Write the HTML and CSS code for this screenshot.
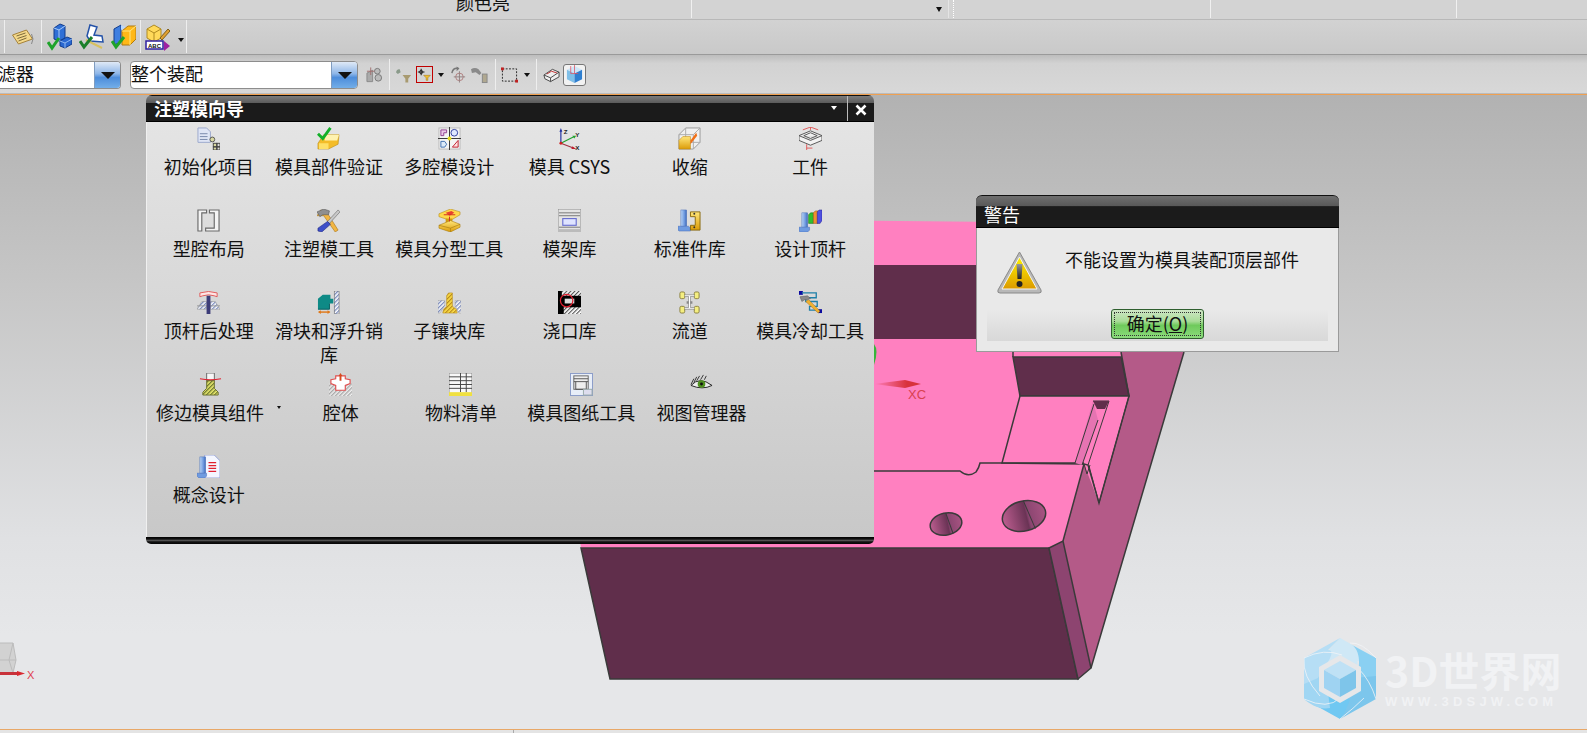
FILE: index.html
```html
<!DOCTYPE html>
<html lang="zh-CN">
<head>
<meta charset="utf-8">
<title>注塑模向导</title>
<link rel="stylesheet" href="styles.css">
</head>
<body>
<svg class="defs" width="0" height="0" aria-hidden="true">
  <defs>
    <pattern id="hb" width="3" height="3" patternUnits="userSpaceOnUse" patternTransform="rotate(45)"><rect width="3" height="3" fill="#fff"/><rect width="1.4" height="3" fill="#7f8fc0"/></pattern>
    <pattern id="hg" width="3" height="3" patternUnits="userSpaceOnUse" patternTransform="rotate(45)"><rect width="3" height="3" fill="#eee"/><rect width="1.4" height="3" fill="#aaa"/></pattern>
    <pattern id="hy" width="3" height="3" patternUnits="userSpaceOnUse" patternTransform="rotate(45)"><rect width="3" height="3" fill="#ffe24a"/><rect width="1.3" height="3" fill="#b98a1c"/></pattern>
    <pattern id="hl" width="3" height="3" patternUnits="userSpaceOnUse" patternTransform="rotate(45)"><rect width="3" height="3" fill="#f0ef70"/><rect width="1.4" height="3" fill="#6f7a30"/></pattern>
    <pattern id="hk" width="3" height="3" patternUnits="userSpaceOnUse" patternTransform="rotate(45)"><rect width="3" height="3" fill="#fff"/><rect width="1.2" height="3" fill="#555"/></pattern>
    <linearGradient id="gold" x1="0" y1="0" x2="0" y2="1"><stop offset="0" stop-color="#ffe67a"/><stop offset="1" stop-color="#dc9c08"/></linearGradient>
    <linearGradient id="pin" x1="0" y1="0" x2="1" y2="0"><stop offset="0" stop-color="#b8d2f4"/><stop offset=".6" stop-color="#6f9be0"/><stop offset="1" stop-color="#3f68b8"/></linearGradient>
    <linearGradient id="warn" x1="0" y1="0" x2="0" y2="1"><stop offset="0" stop-color="#fff200"/><stop offset="1" stop-color="#dc9a00"/></linearGradient>
    <linearGradient id="mark" x1="0" y1="0" x2="0" y2="1"><stop offset="0" stop-color="#999"/><stop offset="1" stop-color="#222"/></linearGradient>
    <linearGradient id="axis" x1="0" y1="0" x2="1" y2="0"><stop offset="0" stop-color="#ff80c0"/><stop offset=".7" stop-color="#d8323c"/><stop offset="1" stop-color="#d8323c"/></linearGradient>
    <linearGradient id="bore" x1="0" y1="0" x2="1" y2="0"><stop offset="0" stop-color="#bd5e90"/><stop offset=".55" stop-color="#6a3355"/><stop offset=".6" stop-color="#8a4570"/><stop offset="1" stop-color="#a85482"/></linearGradient>
  </defs>
</svg>

<header class="ribbon">
  <div class="rb-cell rb-title"><span class="rb-text">颜色亮</span></div>
  <div class="rb-cell rb-b"><span class="rb-caret"></span></div>
  <div class="rb-cell rb-grip"></div>
  <div class="rb-cell rb-c"></div>
  <div class="rb-cell rb-d"></div>
  <div class="rb-cell rb-e"></div>
</header>

<div class="bar-one">
  <div class="grp g-a">
    <svg class="ti-tag" viewBox="0 0 22 18"><path d="M1 7 15 2l6 9-14 5z" fill="#f4d98a" stroke="#a5813a"/><path d="M5 8l9-3M6 10.500l9-3M7 13l8-3" stroke="#7d6a3a"/><path d="M20 6q3 5 0 10" fill="none" stroke="#888"/></svg>
  </div>
  <div class="grp g-b">
    <svg class="ti" viewBox="0 0 25 28"><path d="M7 5l6-4 5 2v12l-6 3-5-2z" fill="#2f6fd6" stroke="#123c8c"/><path d="M7 5l5 2 6-4M12 7v11" fill="none" stroke="#a8ccf8"/><path d="M13 18l7-4 5 2v5l-7 4-5-2z" fill="#2a68d0" stroke="#123c8c"/><path d="M13 18l5 2 7-4M18 20v5" fill="none" stroke="#8fb8f0"/><path d="M1 19l4 6 7-10" fill="none" stroke="#1fa32a" stroke-width="3"/></svg>
    <svg class="ti" viewBox="0 0 25 28"><path d="M11 2l7 2-3 8 8 1 1 6-13-1-3-5z" fill="#fff" stroke="#2452a8" stroke-width="1.500"/><path d="M7 17l16 8" stroke="#d8c060" stroke-width="2"/><path d="M1 18l4 6 8-10" fill="none" stroke="#1a7f2a" stroke-width="3"/></svg>
    <svg class="ti" viewBox="0 0 25 28"><path d="M3 6l7-4v17l-7 3z" fill="#3f7fe0" stroke="#123c8c"/><path d="M10 2l5 2-5 3z" fill="#bcd8fa"/><path d="M11 8l6-5h8v13l-6 6h-8z" fill="#ffb818" stroke="#b07a10"/><path d="M11 8h8l6-5M19 8v14" fill="none" stroke="#ffe680"/><path d="M1 18l4 6 8-10" fill="none" stroke="#1fa32a" stroke-width="3"/></svg>
  </div>
  <div class="grp g-c">
    <svg class="ti" viewBox="0 0 25 28"><path d="M2 6l7-4 7 4v9l-7 4-7-4z" fill="#ffd95a" stroke="#b08a20"/><path d="M2 6l7 4 7-4M9 10v9" fill="none" stroke="#b08a20"/><path d="M15 15l8-9 2 2-8 9z" fill="#e0a030" stroke="#806018"/><rect x="1" y="18" width="17" height="8" fill="#fff" stroke="#3020a0" stroke-width="1.500"/><text class="ti-abc" x="3" y="25">ABC</text><path d="M19 18l6 5-6 5z" fill="#a020a0"/></svg>
    <span class="caret"></span>
  </div>
</div>

<div class="bar-two">
  <div class="combo c-one"><span class="combo-text clip">滤器</span><span class="combo-btn"></span></div>
  <div class="combo c-two"><span class="combo-text">整个装配</span><span class="combo-btn"></span></div>
  <div class="grp2 h-a">
    <svg class="ti2" viewBox="0 0 18 18"><path d="M1 7l6-3v12H1z" fill="#aaa" stroke="#888"/><circle cx="12" cy="5" r="3" fill="#bbb" stroke="#777"/><circle cx="13" cy="12" r="3.500" fill="#bbb" stroke="#777"/><path d="M5 1v8M1 5h8" stroke="#a07070"/></svg>
  </div>
  <div class="grp2 h-b">
    <svg class="ti2" viewBox="0 0 18 18"><path d="M1 6q1-4 4-3l1 3-3 2z" fill="#8a9a8a"/><path d="M8 9h9l-3 4v4h-3v-4z" fill="#a89a70"/></svg>
    <svg class="ti2 boxed" viewBox="0 0 18 18"><path d="M5 2v8M1 6h8" stroke="#222" stroke-width="1.300"/><circle cx="5" cy="6" r="2" fill="none" stroke="#222"/><path d="M8 10h8l-3 3v3h-2v-3z" fill="#f0c030" stroke="#a07010" stroke-width=".6"/></svg>
    <span class="caret small"></span>
    <svg class="ti2" viewBox="0 0 18 18"><path d="M2 7q1-6 7-5" fill="none" stroke="#777" stroke-width="1.500"/><path d="M7 0l3 2-3 3z" fill="#777"/><circle cx="10" cy="11" r="4" fill="none" stroke="#b08080"/><path d="M10 5v12M4 11h12" stroke="#908080"/></svg>
    <svg class="ti2" viewBox="0 0 18 18"><path d="M0 3q4-3 8 0l3 4-2 2-4-3-4 1z" fill="#8a8a8a"/><rect x="12" y="8" width="5" height="9" fill="#b0a890" stroke="#888"/></svg>
  </div>
  <div class="grp2 h-c">
    <svg class="ti2" viewBox="0 0 18 18"><rect x="1.500" y="2.500" width="15" height="13" fill="none" stroke="#222" stroke-dasharray="2 1.500"/><rect x="0" y="1" width="3" height="3" fill="#c02020"/><rect x="15" y="14" width="3" height="3" fill="#c02020"/></svg>
    <span class="caret small"></span>
  </div>
  <div class="grp2 h-d">
    <svg class="ti2" viewBox="0 0 18 18"><path d="M1 9l9-6 7 3v5l-9 5-6-3z" fill="#eee" stroke="#444"/><path d="M4 8l5-3 6 2" fill="none" stroke="#c03030"/><path d="M1 9l7 3 9-6M8 12v4" fill="none" stroke="#444"/></svg>
    <div class="view-btn"><svg class="ti3" viewBox="0 0 18 20"><path d="M1 5l8-4 8 4-8 4z" fill="#cfe6f8"/><path d="M1 5l8 4v10l-8-4z" fill="#7fbfe8"/><path d="M17 5l-8 4v10l8-4z" fill="#2f7fd0"/><path d="M5 1v8h8M9 0v9" fill="none" stroke="#e05060" stroke-width=".8"/></svg></div>
  </div>
</div>

<main class="viewport">
  <svg class="scene" viewBox="0 95 1587 634">
    <!-- part faces -->
    <polygon class="pink" points="800,220 1000,222 1184,352 1063,541 1049,548 581,548 560,400"/>
    <polygon class="side" points="1195,300 1184,352 1091,668 1063,541 1084,464 1099,503 1129,396 1121,352 1121,200"/>
    <polygon class="dark" points="800,265 1010,265 1013,339 800,339"/>
    <polygon class="dark edge" points="1013,357 1121,357 1129,396 1020,396"/>
    <polygon class="pink edge" points="1020,396 1129,396 1099,503 1088,465 1084,464 1002,463"/>
    <polygon class="dark edge" points="581,548 1049,548 1078,679 610,679"/>
    <polygon class="chamfer edge" points="1049,548 1063,541 1091,668 1078,679"/>
    <path class="line" d="M1184,352 1091,668M1121,352 1129,396M1013,339 1013,357"/>
    <path class="line" d="M1084,464 1063,541"/>
    <path class="line" d="M874,471H960Q968,478 976,472Q979,468 980,463H1084"/>
    <!-- slot -->
    <polygon class="sideflat" points="1093,401 1098,420 1082,465 1075,463"/>
    <path class="thin" d="M1093,401H1109L1088,465M1098,420 1082,465M1094,404 1075,463"/>
    <polygon class="dark" points="1093,401 1109,401 1105,409 1097,409"/>
    <path class="thin" d="M1084,464 1087,474 1090,465M1129,396 1099,503 1089,466"/>
    <!-- holes -->
    <g transform="rotate(-12 946 524)"><ellipse class="hole" cx="946" cy="524" rx="16" ry="11"/><path class="thin" d="M948,513 951,535"/></g>
    <g transform="rotate(-14 1024 516)"><ellipse class="hole" cx="1024" cy="516" rx="22" ry="15"/><path class="thin" d="M1027,501 1032,531"/></g>
    <!-- axes -->
    <path class="green" d="M874,344Q879,350 874,365z"/>
    <path class="axis" d="M874,384 905,380 921,384 905,388z"/>
    <text class="xc" x="908" y="399">XC</text>
    <!-- triad -->
    <path class="triad" d="M-8,643H13L16,660 13,673H-8z"/>
    <path class="triad-line" d="M13,643 9,660 13,673M-8,660H16"/>
    <rect class="triad-arm" x="-2" y="672" width="20" height="3"/>
    <path class="triad-tip" d="M17,671l8,2.500-8,2.500z"/>
    <text class="xmark" x="27" y="679">X</text>
  </svg>

  <section class="panel">
    <div class="panel-title">
      <span class="panel-name">注塑模向导</span>
      <span class="panel-arrow"></span>
      <span class="panel-close"><svg class="close-x" viewBox="0 0 12 12"><path d="M1.500 1.500l9 9M10.500 1.500l-9 9" stroke="#fff" stroke-width="2.600"/></svg></span>
    </div>
    <div class="panel-body">
      <div class="row">
        <div class="cell"><svg class="pi" viewBox="0 0 24 24"><path d="M1 1h9l4 4v11H1z" fill="#dfe5f5" stroke="#9aa7cc"/><path d="M3 7h8M3 10h8M3 13h8" stroke="#7788aa"/><circle cx="16" cy="13" r="2.500" fill="#d8d8a0" stroke="#555"/><rect x="17" y="17" width="3.500" height="3.500" fill="#d8d8a0" stroke="#444"/><rect x="17" y="21" width="3.500" height="3" fill="#d8d8a0" stroke="#444"/><rect x="21" y="17" width="3" height="3.500" fill="#ddd" stroke="#444"/><rect x="21" y="21" width="3" height="3" fill="#ddd" stroke="#444"/></svg><span class="label">初始化项目</span></div>
        <div class="cell"><svg class="pi" viewBox="0 0 24 24"><path d="M1 17 7 8h16l-1 10-10 5H1z" fill="#f4bc28" stroke="#b88b18" stroke-width=".6"/><path d="M8 14h13l2-6H9z" fill="#fff2b0"/><path d="M2 17l10 0v6H2z" fill="#ffe067"/><path d="M1 7l5 5 8-11" fill="none" stroke="#12b028" stroke-width="3"/></svg><span class="label">模具部件验证</span></div>
        <div class="cell"><svg class="pi" viewBox="0 0 24 24"><rect x="1" y="1" width="22" height="22" fill="#f4f4f4" stroke="#bbb"/><path d="M12 0v24M0 12h24" stroke="#333"/><path d="M3 3h6v3H6v3H3z" fill="#eac8e8" stroke="#904090"/><circle cx="17" cy="6" r="3.500" fill="#dfe8ff" stroke="#3040a0"/><path d="M3 15h4l2 3-2 3H3z" fill="#dceaf8" stroke="#4070b0"/><path d="M21 14v7h-6z" fill="#ffe0e0" stroke="#c02030"/><circle cx="12" cy="12" r="2" fill="#e8e020"/></svg><span class="label">多腔模设计</span></div>
        <div class="cell"><svg class="pi" viewBox="0 0 24 24"><path d="M3 17V3" stroke="#2030a0" stroke-width="1.200"/><path d="M1.500 5 3 1l1.500 4z" fill="#2030a0"/><path d="M3 17 17 10" stroke="#20a030" stroke-width="1.200"/><path d="M15 9l4 0-2 3z" fill="#20a030"/><path d="M3 17l13 5" stroke="#a03040" stroke-width="1.200"/><path d="M15 20l4 3-5 0z" fill="#c02030"/><circle cx="3" cy="17" r="1.500" fill="#d02020"/><text class="axis-t" x="6" y="7">Z</text><text class="axis-t" x="18" y="10">Y</text><text class="axis-t" x="18" y="24">X</text></svg><span class="label">模具 CSYS</span></div>
        <div class="cell"><svg class="pi" viewBox="0 0 24 24"><path d="M8 1h15v15l-7 7H1V8z" fill="#f0f0f0" stroke="#999"/><path d="M1 8h15v15M16 8l7-7M8 1v15h15" fill="none" stroke="#aaa"/><path d="M1 14l4-4h8v13H1z" fill="url(#gold)" stroke="#c08a18" stroke-width=".6"/><path d="M13 14l6-8 1 3-7 9z" fill="#f07018"/></svg><span class="label">收缩</span></div>
        <div class="cell"><svg class="pi" viewBox="0 0 24 24"><path d="M0 9 12 4l12 5-12 5zM0 9v5l12 5 12-5V9" fill="#f2f2f2" stroke="#555"/><path d="M5 9l7-3 7 3-7 3z" fill="none" stroke="#555"/><path d="M12 0v3M4 3l8-3 8 3M8 22h6M8 18v6" fill="none" stroke="#e05a5a"/></svg><span class="label">工件</span></div>
      </div>
      <div class="row">
        <div class="cell"><svg class="pi" viewBox="0 0 24 24"><path d="M1 1h9v3H5v19H1zM13 1h10v22H9v-3h9V4h-5z" fill="#f4f4f4" stroke="#6a6a6a" stroke-width="1.200"/></svg><span class="label">型腔布局</span></div>
        <div class="cell"><svg class="pi" viewBox="0 0 24 24"><path d="M4 1 10 3 22 22l-3 2L7 7 0 7z" fill="#f2b642" stroke="#a07018" stroke-width=".6"/><path d="M0 3l7-3 6 2-1 4-6 0-3 2z" fill="#8f8f8f" stroke="#555" stroke-width=".6"/><path d="M22 1l2 2-11 12-2-2z" fill="#c8c8c8" stroke="#666" stroke-width=".6"/><path d="M11 13l3 3-9 8-4-1 0-3z" fill="#3d4fc8" stroke="#1a2380" stroke-width=".6"/></svg><span class="label">注塑模工具</span></div>
        <div class="cell"><svg class="pi" viewBox="0 0 24 24"><path d="M1 5 13 0l10 3v3l-10 6L1 8z" fill="#ffd84a" stroke="#b48a18" stroke-width=".6"/><path d="M8 4l6-2 3 2-5 3z" fill="#e84030"/><path d="M8 10h7v6H8z" fill="#d49a10"/><path d="M1 17 13 12l10 4v3l-10 5-12-4z" fill="url(#gold)" stroke="#a87c10" stroke-width=".6"/><path d="M1 17l12 3 10-4M13 20v4" fill="none" stroke="#a87c10" stroke-width=".7"/><path d="M12 8v5M6 6h12" stroke="#d03020"/></svg><span class="label">模具分型工具</span></div>
        <div class="cell"><svg class="pi" viewBox="0 0 24 24"><rect x="0" y="0" width="24" height="24" fill="#e4e4e4" stroke="#888"/><path d="M1 4h22M1 7h22M1 19h22" stroke="#777"/><rect x="5" y="10" width="14" height="7" fill="#dfe4ff" stroke="#6a70d0" stroke-width="1.200"/><rect x="0" y="21" width="24" height="3" fill="#bbb"/></svg><span class="label">模架库</span></div>
        <div class="cell"><svg class="pi" viewBox="0 0 24 24"><rect x="3" y="1" width="6" height="17" fill="url(#pin)" stroke="#4a70b8" stroke-width=".5"/><path d="M0 18h11l2 2v3H1l-1-1z" fill="#6f9be0" stroke="#3f68b8" stroke-width=".5"/><path d="M13 3h10v19H13v-5h5V8h-5z" fill="url(#gold)" stroke="#8a6a10"/><circle cx="17" cy="5" r="1" fill="#333"/><circle cx="17" cy="19" r="1" fill="#333"/></svg><span class="label">标准件库</span></div>
        <div class="cell"><svg class="pi" viewBox="0 0 24 24"><rect x="3" y="4" width="6" height="15" fill="url(#pin)" stroke="#4a70b8" stroke-width=".5"/><path d="M0 19h11v3l-2 2H1l-1-1z" fill="#6f9be0" stroke="#3f68b8" stroke-width=".5"/><path d="M10 6l2-2h3v11h-5z" fill="#2fc02f" stroke="#106010" stroke-width=".5"/><path d="M15 4l2-2h3v13h-5z" fill="#f09030" stroke="#905010" stroke-width=".5"/><path d="M19 3l2-2h3v11l-2 3h-3z" fill="#5050e0" stroke="#202090" stroke-width=".5"/></svg><span class="label">设计顶杆</span></div>
      </div>
      <div class="row">
        <div class="cell"><svg class="pi" viewBox="0 0 24 24"><path d="M3 6V2q9-3 18 0v4l-3-1q-6-2-12 0z" fill="#ffe4e4" stroke="#e05a5a"/><path d="M0 19 5 11h5v8zM24 19l-5-8h-5v8z" fill="url(#hb)" stroke="#8a8a8a" stroke-width=".5"/><rect x="0" y="15" width="24" height="1" fill="#999"/><rect x="10" y="5" width="4" height="19" fill="#3c3c78"/></svg><span class="label">顶杆后处理</span></div>
        <div class="cell"><svg class="pi" viewBox="0 0 24 24"><path d="M1 8 6 4h8v4h3v5h-4v6H1z" fill="#0e8a86"/><path d="M1 19h12v-6" fill="none" stroke="#075e60"/><path d="M2 22h11" stroke="#e07818" stroke-width="1.500"/><path d="M1 22l3-2v4zM14 22l-3-2v4z" fill="#e07818"/><rect x="18" y="0" width="5" height="24" fill="url(#hb)" stroke="#666" stroke-width=".6"/></svg><span class="label">滑块和浮升销库</span></div>
        <div class="cell"><svg class="pi" viewBox="0 0 24 24"><path d="M0 10h7v5l-5 8H0zM24 10h-6v6l4 7h2z" fill="url(#hb)" stroke="#888" stroke-width=".4"/><path d="M9 5l2-3h4v14l4 3 1 4H5l1-4 3-3z" fill="url(#hy)" stroke="#b88a18" stroke-width=".6"/></svg><span class="label">子镶块库</span></div>
        <div class="cell"><svg class="pi" viewBox="0 0 24 24"><rect width="24" height="24" fill="#000"/><rect x="4" y="0" width="20" height="5" fill="url(#hk)"/><rect x="6" y="17" width="18" height="7" fill="url(#hk)"/><rect x="7" y="8" width="10" height="5" fill="#ddd"/><circle cx="9" cy="10" r="6.500" fill="none" stroke="#e02030" stroke-width="1.300"/></svg><span class="label">浇口库</span></div>
        <div class="cell"><svg class="pi" viewBox="0 0 24 24"><rect x="2" y="1" width="5" height="7" rx="1.500" fill="#f4ee80" stroke="#8a8040"/><rect x="17" y="1" width="5" height="7" rx="1.500" fill="#f4ee80" stroke="#8a8040"/><rect x="2" y="16" width="5" height="7" rx="1.500" fill="#f4ee80" stroke="#8a8040"/><rect x="17" y="16" width="5" height="7" rx="1.500" fill="#f4ee80" stroke="#8a8040"/><path d="M7 5h10M12 5v13M7 18h10M9 12h6" fill="none" stroke="#888" stroke-width="2.500"/><path d="M7 5h10M12 5v13M7 18h10" fill="none" stroke="#fff" stroke-width="1.200"/></svg><span class="label">流道</span></div>
        <div class="cell"><svg class="pi" viewBox="0 0 24 24"><rect x="0" y="0" width="4" height="4" fill="#0a0aa0"/><rect x="20" y="19" width="4" height="4" fill="#0a0aa0"/><path d="M3 2h15v5H7v4h12v5H11v4h10" fill="none" stroke="#1f80a8" stroke-width="1.400"/><path d="M10 9 22 21l-2 2L7 11z" fill="#f0b030" stroke="#a07018" stroke-width=".5"/><path d="M1 6l8-1 3 3-4 1-2 0-3 2z" fill="#8a8a8a" stroke="#555" stroke-width=".5"/></svg><span class="label">模具冷却工具</span></div>
      </div>
      <div class="row">
        <div class="cell wide"><svg class="pi" viewBox="0 0 24 24"><rect x="8" y="0" width="8" height="8" fill="#f6f6f6" stroke="#666"/><path d="M8 8h8v8l4 4v3H4v-3l4-4z" fill="url(#hl)" stroke="#6a7030"/><path d="M1 6q11 2 22 0" fill="none" stroke="#e02030" stroke-width="1.200"/></svg><span class="label">修边模具组件</span><span class="row-caret"></span></div>
        <div class="cell"><svg class="pi" viewBox="0 0 24 24"><path d="M0 11h5l2 4h10l2-4h5v13H0z" fill="url(#hg)"/><path d="M2 7l5-1V3h10v3l5 1v4l-5 2v5H7v-5l-5-2z" fill="#fff" stroke="#e05050" stroke-width="1.200"/><path d="M12 0l2 3h-1v5h-2V3h-1z" fill="#d84a20"/></svg><span class="label">腔体</span></div>
        <div class="cell"><svg class="pi" viewBox="0 0 24 24"><rect width="24" height="24" fill="#f8f8f8" stroke="#888"/><path d="M0 4h24M0 8h24M0 12h24M0 16h24M12 0v20M18 0v20" stroke="#444"/><rect y="20" width="24" height="4" fill="#f0e040"/></svg><span class="label">物料清单</span></div>
        <div class="cell"><svg class="pi" viewBox="0 0 24 24"><rect x=".5" y=".5" width="23" height="23" fill="#e8eef8" stroke="#8a9cc8"/><rect x="4" y="3" width="15" height="14" fill="#eee" stroke="#666"/><path d="M4 6h15M4 9h15M6 9v8h11V9" fill="none" stroke="#555"/><rect x="14" y="17" width="9" height="6" fill="#dde" stroke="#9aa"/></svg><span class="label">模具图纸工具</span></div>
        <div class="cell"><svg class="pi" viewBox="0 0 24 24"><path d="M1 13Q10 3 23 13 13 18 1 13z" fill="#eee" stroke="#222"/><circle cx="12" cy="11.500" r="4" fill="#4f9020"/><circle cx="12" cy="11.500" r="1.500" fill="#111"/><path d="M1 12 4 6M4 10 7 4M7 8l3-5M11 7l3-5M15 7l2-4" stroke="#333"/></svg><span class="label">视图管理器</span></div>
      </div>
      <div class="row">
        <div class="cell"><svg class="pi" viewBox="0 0 24 24"><path d="M8 0h10l6 6v18H8z" fill="#f4f6ff" stroke="#9aa6d8"/><path d="M12 8h8M12 11h8M12 14h8M12 17h8" stroke="#e02030" stroke-width="1.300"/><rect x="3" y="2" width="6" height="17" fill="url(#pin)" stroke="#4a70b8" stroke-width=".5"/><path d="M0 19h10v3l-2 2H2l-2-2z" fill="#6f9be0" stroke="#3f68b8" stroke-width=".5"/></svg><span class="label">概念设计</span></div>
      </div>
    </div>
    <div class="panel-foot"></div>
  </section>

  <section class="dialog">
    <div class="dialog-title"><span class="dialog-name">警告</span></div>
    <div class="dialog-body">
      <div class="dialog-msg">
        <svg class="warn" viewBox="0 0 45 43"><path d="M22.500 1 44 39q1 3-2 3H3q-3 0-2-3z" fill="#b8b8b8" stroke="#8a8a8a"/><path d="M22.500 6 40 38H5z" fill="url(#warn)" stroke="#f4f4f4"/><path d="M19.500 13h6l-1 15h-4z" fill="url(#mark)"/><circle cx="22.500" cy="33" r="3" fill="#222"/></svg>
        <p class="msg-text">不能设置为模具装配顶层部件</p>
      </div>
      <div class="dialog-actions">
        <button class="ok"><span class="ok-inner">确定(<u>O</u>)</span></button>
      </div>
    </div>
  </section>

  <div class="brand">
    <svg class="brand-logo" viewBox="0 0 72 81">
      <path d="M36 0 72 20 50 24 36 16z" fill="#cfe8f6"/>
      <path d="M36 0C52 10 58 26 50 40L36 40 14 24z" fill="#cfe8f6"/>
      <path d="M72 20V61L50 40C58 30 56 12 48 7z" fill="#8ad0f2"/>
      <path d="M72 61 36 81 50 40 72 38z" fill="#7cc6ec"/>
      <path d="M36 81 0 61 20 40 46 62C44 66 40 78 36 81z" fill="#70c8f2"/>
      <path d="M0 61V20L22 40 26 70C14 72 6 66 0 61z" fill="#a0d6f3"/>
      <path d="M0 20 36 0 24 12C34 12 20 30 14 40L0 46z" fill="#b6def5"/>
      <path d="M0 20Q20 10 38 17M72 20Q58 4 46 5M72 61Q66 42 54 30M36 81Q50 70 60 60M0 61Q24 72 36 60M0 20Q-2 38 16 58" fill="none" stroke="#f2f4f6" stroke-width=".8"/>
      <polygon points="36,17 57,29 57,53 36,65 15,53 15,29" fill="#e6e7e9"/>
      <polygon points="36,23 52,32 36,41 20,32" fill="#bfe1f5"/>
      <polygon points="20,32 36,41 36,59 20,50" fill="#9fd3f2"/>
      <polygon points="52,32 36,41 36,59 52,50" fill="#7ec5ea"/>
    </svg>
    <div class="brand-text">
      <div class="brand-name">3D世界网</div>
      <div class="brand-url">WWW.3DSJW.COM</div>
    </div>
  </div>
</main>

<footer class="status"><span class="status-left"></span></footer>
</body>
</html>
```

FILE: styles.css
```css
* { box-sizing: border-box; }
html, body { margin: 0; height: 100%; }
body {
  width: 1587px;
  height: 733px;
  overflow: hidden;
  display: flex;
  flex-direction: column;
  font-family: "Noto Sans CJK SC", "Liberation Sans", sans-serif;
  color: #111;
  background: #ccc;
}
.defs { position: absolute; }

/* ribbon strip, clipped at the top of the picture */
.ribbon {
  height: 20px;
  flex: none;
  display: flex;
  overflow: hidden;
  background: #d3d3d3;
  border-bottom: 1px solid #b8b8b8;
}
.rb-cell { height: 18px; border-right: 1px solid #f0f0f0; position: relative; }
.rb-title { width: 692px; padding-left: 456px; }
.rb-b { width: 257px; border-right-color: #e4e4e4; }
.rb-grip { width: 6px; border-right: 0; border-left: 1px dotted #fff; margin-left: 4px; }
.rb-c { width: 252px; }
.rb-d { width: 246px; }
.rb-e { flex: 1; border-right: 0; }
.rb-text { display: block; margin-top: -10px; font-size: 18px; line-height: 24px; }
.rb-caret {
  position: absolute; right: 6px; top: 7px;
  border: 3px solid transparent; border-top: 5px solid #111; border-bottom: 0;
}

/* toolbars */
.bar-one {
  height: 35px;
  flex: none;
  display: flex;
  padding-left: 4px;
  background: linear-gradient(#d2d2d2, #c9c9c9);
  border-bottom: 1px solid #9a9a9a;
}
.grp {
  height: 33px;
  display: flex;
  align-items: center;
  border-left: 1px solid #eee;
}
.g-a { width: 37px; padding-left: 6px; }
.g-b { width: 99px; padding-left: 5px; gap: 7px; }
.g-c { width: 47px; padding-left: 4px; border-right: 1px solid #eee; }
.ti { width: 25px; height: 28px; flex: none; }
.ti-tag { width: 23px; height: 18px; }
.ti-abc { font: bold 6px "Liberation Sans", sans-serif; fill: #111; }
.axis-t { font: bold 6.500px "Liberation Sans", sans-serif; fill: #222; }
.caret {
  margin-left: 8px; margin-top: 6px;
  border: 3px solid transparent; border-top: 4px solid #111; border-bottom: 0;
}
.caret.small { margin: 0 2px 0 1px; }

.bar-two {
  height: 39px;
  flex: none;
  display: flex;
  align-items: flex-start;
  padding-top: 6px;
  background: linear-gradient(#bdbdbd, #d2d2d2 22%, #d8d8d8);
  border-bottom: 1px solid #bbb;
}
.combo {
  height: 28px;
  display: flex;
  justify-content: space-between;
  background: #fff;
  border: 1px solid #8d8d8d;
  border-radius: 4px;
  overflow: hidden;
}
.c-one { width: 121px; border-left: 0; border-radius: 0 4px 4px 0; }
.c-two { width: 228px; margin-left: 9px; }
.combo-text { font-size: 18px; line-height: 23px; white-space: nowrap; }
.combo-text.clip { margin-left: -2px; }
.combo-btn {
  width: 26px;
  display: flex;
  align-items: center;
  justify-content: center;
  background: linear-gradient(#dfe9f6, #8eb6e8 45%, #4d8ddb 60%, #73aee8);
  border-left: 1px solid #7f9cc0;
}
.combo-btn::after {
  content: "";
  border: 7px solid transparent;
  border-top: 7px solid #111;
  border-bottom: 0;
}
.grp2 { display: flex; align-items: center; height: 31px; margin-top: -2px; }
.ti2 { width: 17px; height: 18px; flex: none; }
.boxed { border: 1px solid #c00000; }
.h-a { width: 32px; padding-left: 8px; border-right: 1px solid #eee; }
.h-b { width: 106px; padding-left: 5px; gap: 4px; border-right: 1px solid #eee; }
.h-c { width: 41px; padding-left: 5px; gap: 5px; border-right: 1px solid #eee; }
.h-d { padding-left: 6px; gap: 3px; }
.h-b .boxed { width: 17px; height: 17px; }
.view-btn {
  width: 23px; height: 22px;
  background: #f2f2f2;
  border: 1px solid #777;
  border-radius: 3px;
  display: flex; align-items: center; justify-content: center;
}
.ti3 { width: 17px; height: 19px; }

/* graphics window */
.viewport {
  flex: 1;
  position: relative;
  border-top: 1px solid #f0a050;
  background: linear-gradient(#b2b2b2, #c6c6c6 30%, #e0e1e3 70%, #e6e7e9 85%);
  overflow: hidden;
}
.scene { position: absolute; left: 0; top: 0; width: 1587px; height: 634px; }
.pink { fill: #ff80c0; }
.dark { fill: #602e4b; }
.side { fill: #b45a88; }
.sideflat { fill: #e674b2; }
.chamfer { fill: #8d4470; }
.edge { stroke: #3a3a3a; stroke-width: 1.500; }
.line { fill: none; stroke: #3a3a3a; stroke-width: 1.500; }
.thin { fill: none; stroke: #3a3a3a; stroke-width: 1; }
.hole { fill: url(#bore); stroke: #3a3a3a; stroke-width: 1.500; }
.green { fill: #36b53a; }
.axis { fill: url(#axis); }
.xc { font: 13px "Liberation Sans", sans-serif; fill: #d84050; }
.triad { fill: #d2d2d2; stroke: #bcbcbc; }
.triad-line { fill: none; stroke: #bcbcbc; }
.triad-arm { fill: #c8323a; }
.triad-tip { fill: #d8282f; }
.xmark { font: 11px "Liberation Sans", sans-serif; fill: #e04050; }

/* mold wizard palette */
.panel {
  position: absolute;
  left: 146px;
  top: 0;
  width: 728px;
  height: 449px;
  display: flex;
  flex-direction: column;
  border-radius: 6px 6px 5px 5px;
  overflow: hidden;
}
.panel-title {
  height: 27px;
  flex: none;
  display: flex;
  align-items: flex-end;
  position: relative;
  padding-bottom: 2px;
  background: linear-gradient(#7c7c7c, #5a5a5a 29%, #1b1b1b 30%);
  border-top: 1px solid #111;
  border-bottom: 1px solid #000;
}
.panel-name {
  padding-left: 8px;
  font-size: 18px;
  line-height: 21px;
  font-weight: 700;
  color: #fff;
}
.panel-arrow {
  position: absolute; left: 685px; top: 10px;
  border: 3px solid transparent; border-top: 4px solid #fff; border-bottom: 0;
}
.panel-close {
  position: absolute; left: 701px; right: 0; top: 0; bottom: 0;
  border-left: 1px solid #bbb;
  display: flex; align-items: center; justify-content: center;
}
.close-x { width: 12px; height: 12px; margin-top: 3px; }
.panel-body {
  flex: 1;
  padding: 5px 0 0 1.500px;
  background: linear-gradient(#e4e4e4, #c8c8c8);
  border-left: 1px solid #f0f0f0;
}
.row { display: flex; height: 82px; }
.cell {
  width: 120.300px;
  flex: none;
  display: flex;
  flex-direction: column;
  align-items: center;
  position: relative;
}
.cell.wide { width: 132px; padding-right: 9px; }
.pi { width: 23px; height: 23px; flex: none; }
.label {
  margin-top: 4px;
  font-size: 18px;
  line-height: 24px;
  text-align: center;
  width: 112px;
}
.wide .label { width: 123px; }
.row-caret {
  position: absolute; left: 128px; top: 33px;
  border: 2.500px solid transparent; border-top: 3px solid #111; border-bottom: 0;
}
.panel-foot {
  height: 8px;
  flex: none;
  background: linear-gradient(#000, #111 25%, #555 45%, #111 60%, #000);
}

/* warning dialog */
.dialog {
  position: absolute;
  left: 976px;
  top: 100px;
  width: 363px;
  height: 157px;
  display: flex;
  flex-direction: column;
  background: #e9e9e9;
  border: 1px solid #9a9a9a;
  border-top: 0;
  border-radius: 6px 6px 0 0;
}
.dialog-title {
  height: 33px;
  flex: none;
  margin: 0 -1px;
  display: flex;
  align-items: flex-end;
  padding-bottom: 2px;
  background: linear-gradient(#6f6f6f, #585858 33%, #1b1b1b 34%);
  border-top: 1px solid #111;
  border-bottom: 1px solid #000;
  border-radius: 6px 6px 0 0;
}
.dialog-name { padding-left: 8px; font-size: 18px; line-height: 22px; color: #fff; }
.dialog-body { flex: 1; display: flex; flex-direction: column; }
.dialog-msg {
  height: 82px;
  flex: none;
  display: flex;
  align-items: flex-start;
  gap: 23px;
  padding: 19px 0 0 20px;
}
.warn { width: 45px; height: 43px; margin-top: 4px; flex: none; }
.msg-text { margin: 0; font-size: 18px; line-height: 24px; white-space: nowrap; }
.dialog-actions {
  height: 31px;
  margin: 0 10px;
  display: flex;
  justify-content: center;
  background: linear-gradient(#e9e9e9, #d8d8d8);
}
.ok {
  width: 93px;
  height: 30px;
  margin-top: -1px;
  padding: 2px;
  font: 18px "Noto Sans CJK SC", sans-serif;
  color: #111;
  background: linear-gradient(#cfe6c6, #a9dc98 40%, #6fca5c 55%, #8cdc7c);
  border: 1px solid #2f5f2f;
  border-radius: 3px;
}
.ok-inner {
  display: block;
  height: 100%;
  line-height: 21px;
  border: 1px dotted #333;
}

/* watermark */
.brand {
  position: absolute;
  left: 1304px;
  top: 543px;
  display: flex;
  align-items: flex-start;
  gap: 9px;
}
.brand-logo { width: 72px; height: 81px; flex: none; }
.brand-text { padding-top: 9px; color: #f1f2f4; }
.brand-name {
  font-size: 41px;
  line-height: 44px;
  font-weight: 700;
  white-space: nowrap;
}
.brand-url {
  margin-top: 4px;
  font: 700 13px/14px "Liberation Sans", sans-serif;
  letter-spacing: 4.200px;
  white-space: nowrap;
}

/* status bar */
.status {
  height: 4px;
  flex: none;
  background: #e4e4e4;
  border-top: 1px solid #e8a868;
}
.status-left { display: block; width: 514px; height: 3px; border-right: 1px solid #aaa; }
```
